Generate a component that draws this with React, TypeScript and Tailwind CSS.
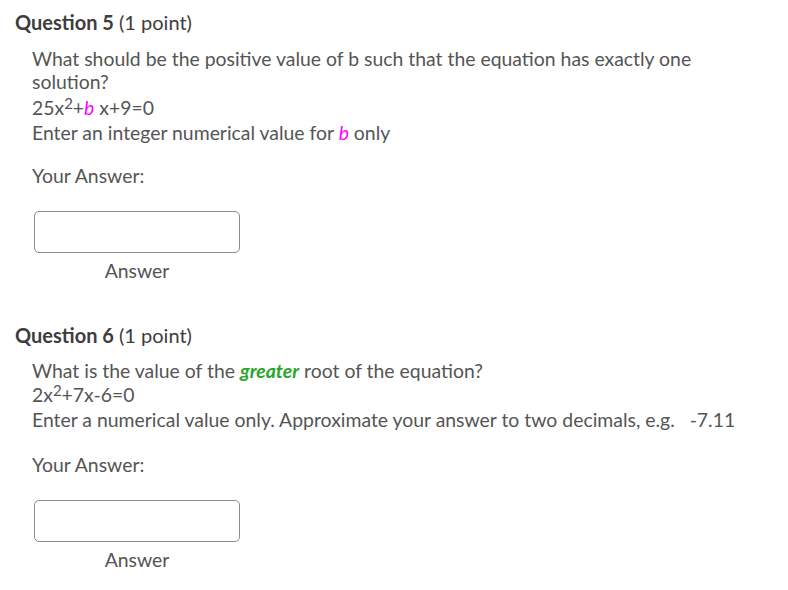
import React from 'react';

const Sup: React.FC<{ children: React.ReactNode }> = ({ children }) => (
  <sup className="text-[15px] relative -top-[6px] align-baseline leading-none">{children}</sup>
);

const AnswerBox: React.FC = () => (
  <div className="w-[206px] ml-[2px] flex flex-col items-center">
    <input
      type="text"
      className="w-[206px] h-[42px] rounded-[5px] border border-[#8a8d91] bg-white outline-none"
    />
    <div className="mt-[6px] text-[#555555]">Answer</div>
  </div>
);

const App: React.FC = () => {
  return (
    <div
      className="w-[788px] h-[590px] bg-white text-[19.4px] leading-[24px] text-[#555555] pl-[15px] pt-[9px]"
      style={{ fontFamily: 'Lato, "Open Sans", sans-serif' }}
    >
      {/* Question 5 */}
      <div>
        <h2 className="text-[#3d3d3d] text-[20px] leading-[26px]">
          <span className="font-bold">Question 5</span> (1 point)
        </h2>
        <div className="pl-[17px] pt-[12px] max-w-[720px]">
          <p className="leading-[23px]">
            What should be the positive value of b such that the equation has exactly one solution?
          </p>
          <p className="leading-[26px] pt-[2px]">
            25x<Sup>2</Sup>+<span className="italic text-[#ff00ff]">b</span> x+9=0
          </p>
          <p className="leading-[23px]">
            Enter an integer numerical value for <span className="italic text-[#ff00ff]">b</span> only
          </p>
          <p className="mt-[20px]">Your Answer:</p>
          <div className="mt-[23px]">
            <AnswerBox />
          </div>
        </div>
      </div>

      {/* Question 6 */}
      <div className="mt-[39px]">
        <h2 className="text-[#3d3d3d] text-[20px] leading-[26px]">
          <span className="font-bold">Question 6</span> (1 point)
        </h2>
        <div className="pl-[17px] pt-[11px]">
          <p className="leading-[24px]">
            What is the value of the{' '}
            <span className="font-bold italic text-[#2aa52a]">greater</span> root of the equation?
          </p>
          <p className="leading-[24px]">
            2x<Sup>2</Sup>+7x-6=0
          </p>
          <p className="leading-[25px] whitespace-pre">
            Enter a numerical value only. Approximate your answer to two decimals, e.g.   -7.11
          </p>
          <p className="mt-[21px]">Your Answer:</p>
          <div className="mt-[23px]">
            <AnswerBox />
          </div>
        </div>
      </div>
    </div>
  );
};

export default App;
